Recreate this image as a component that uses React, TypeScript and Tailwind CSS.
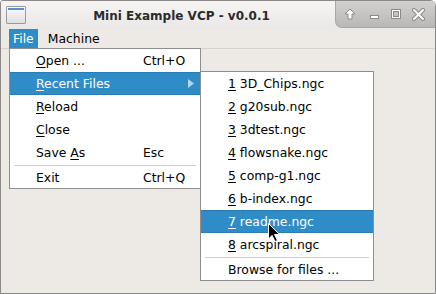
import React from 'react';

// Mnemonic letter helper: underline one character like Qt does
const M = ({ children }: { children: React.ReactNode }) => (
  <span className="underline underline-offset-2 decoration-1">{children}</span>
);

const fileItems = [
  { label: <><M>O</M>pen ...</>, shortcut: 'Ctrl+O' },
  { label: <><M>R</M>ecent Files</>, active: true, sub: true },
  { label: <><M>R</M>eload</> },
  { label: <><M>C</M>lose</> },
  { label: <>Save <M>A</M>s</>, shortcut: 'Esc' },
];

const recent = ['3D_Chips.ngc', 'g20sub.ngc', '3dtest.ngc', 'flowsnake.ngc', 'comp-g1.ngc', 'b-index.ngc', 'readme.ngc', 'arcspiral.ngc'];

const TitleButtons = () => (
  <div className="flex items-center gap-[10px] h-[27px] pl-[8px] pr-[10px] rounded-bl-[7px] bg-gradient-to-b from-[#d2d1d0] to-[#b9b8b7] border-l border-b border-[#a9a8a7]">
    <svg width="12" height="12" viewBox="0 0 12 12">
      <path d="M6 1 L11 6 L8 6 L8 11 L4 11 L4 6 L1 6 Z" fill="#fff" stroke="#8a8a8a" strokeWidth="1" strokeLinejoin="round" />
    </svg>
    <svg width="12" height="12" viewBox="0 0 12 12" className="ml-[2px]">
      <rect x="2.5" y="7.5" width="8" height="3" fill="#fff" stroke="#8a8a8a" />
    </svg>
    <svg width="12" height="12" viewBox="0 0 12 12">
      <rect x="1.5" y="1.5" width="9" height="9" fill="none" stroke="#8a8a8a" strokeWidth="1" />
      <rect x="2.5" y="2.5" width="7" height="7" fill="none" stroke="#fff" strokeWidth="1" />
      <rect x="3.5" y="3.5" width="5" height="5" fill="none" stroke="#8a8a8a" strokeWidth="1" />
    </svg>
    <svg width="13" height="13" viewBox="0 0 13 13">
      <path d="M2 2 L11 11 M11 2 L2 11" stroke="#8a8a8a" strokeWidth="4" strokeLinecap="round" />
      <path d="M2 2 L11 11 M11 2 L2 11" stroke="#fff" strokeWidth="2" strokeLinecap="round" />
    </svg>
  </div>
);

export default function App() {
  return (
    <div className="relative w-[436px] h-[294px] overflow-hidden bg-[#edeae6] border border-[#8a8987] rounded-tr-[6px] rounded-tl-[3px] flex flex-col font-['DejaVu_Sans',sans-serif] text-[12.4px] text-black">
      {/* Title bar */}
      <div className="h-[28px] flex items-start bg-gradient-to-b from-[#f6f5f4] to-[#e9e8e7]">
        <div className="mt-[5px] ml-[5px] w-[20px] h-[18px] border border-[#9a9a9a] bg-gradient-to-b from-[#fbfbfb] to-[#e0e0e0] rounded-[1px]">
          <div className="mt-[1px] mx-[1px] h-[2px] bg-[#5a8fd0]" />
        </div>
        <div className="flex-1 h-full flex items-center justify-center font-bold text-[12px] text-[#2b2b2b] pl-[2px] pt-[1px]">
          Mini Example VCP - v0.0.1
        </div>
        <TitleButtons />
      </div>

      {/* Menu bar */}
      <div className="h-[20px] flex items-stretch pl-[8px] border-b border-[#d6d3cf]">
        <div className="px-[4px] pt-[1px] flex items-center bg-[#308cc6] text-white">File</div>
        <div className="px-[10px] pt-[1px] flex items-center">Machine</div>
      </div>

      <div className="flex-1" />

      {/* File menu */}
      <div className="absolute left-[8px] top-[47px] w-[192px] bg-white border border-[#8e8e8e] flex flex-col">
        {fileItems.map((it, i) => (
          <div
            key={i}
            className={`h-[23px] flex items-center pl-[26px] pr-[4px] pt-[2px] ${it.active ? 'bg-[#308cc6] text-white border-y border-[#2a7db3]' : ''}`}
          >
            <span className="w-[107px]">{it.label}</span>
            <span className="flex-1">{it.shortcut}</span>
            {it.sub && (
              <svg width="6" height="9" viewBox="0 0 6 9" className="mr-[2px] -mt-[2px]">
                <path d="M0 0 L6 4.5 L0 9 Z" fill="#b3d6ee" />
              </svg>
            )}
          </div>
        ))}
        <div className="h-[3px] flex items-center px-[4px]">
          <div className="h-px w-full bg-[#cfcfcf]" />
        </div>
        <div className="h-[21px] flex items-center pl-[26px] pr-[4px] pt-[1px]">
          <span className="w-[107px]">Exit</span>
          <span>Ctrl+Q</span>
        </div>
      </div>

      {/* Recent files submenu */}
      <div className="absolute left-[199px] top-[70px] w-[174px] bg-white border border-[#8e8e8e] flex flex-col">
        {recent.map((f, i) => (
          <div
            key={f}
            className={`h-[23px] flex items-center pl-[27px] pt-[2px] ${i === 6 ? 'bg-[#308cc6] text-white border-y border-[#2a7db3]' : ''}`}
          >
            <M>{i + 1}</M>&nbsp;{f}
          </div>
        ))}
        <div className="h-[3px] flex items-center px-[4px]">
          <div className="h-px w-full bg-[#cfcfcf]" />
        </div>
        <div className="h-[21px] flex items-center pl-[27px] pt-[1px]">Browse for files ...</div>
      </div>

      {/* Mouse cursor */}
      <svg className="absolute left-[267px] top-[222px]" width="13" height="20" viewBox="0 0 13 20">
        <path d="M0.5 0.5 L0.5 16 L4 12.5 L7 18.5 L9.5 17.5 L6.5 11.5 L11.5 11.5 Z" fill="#000" stroke="#fff" strokeWidth="1" strokeLinejoin="round" />
      </svg>
    </div>
  );
}
